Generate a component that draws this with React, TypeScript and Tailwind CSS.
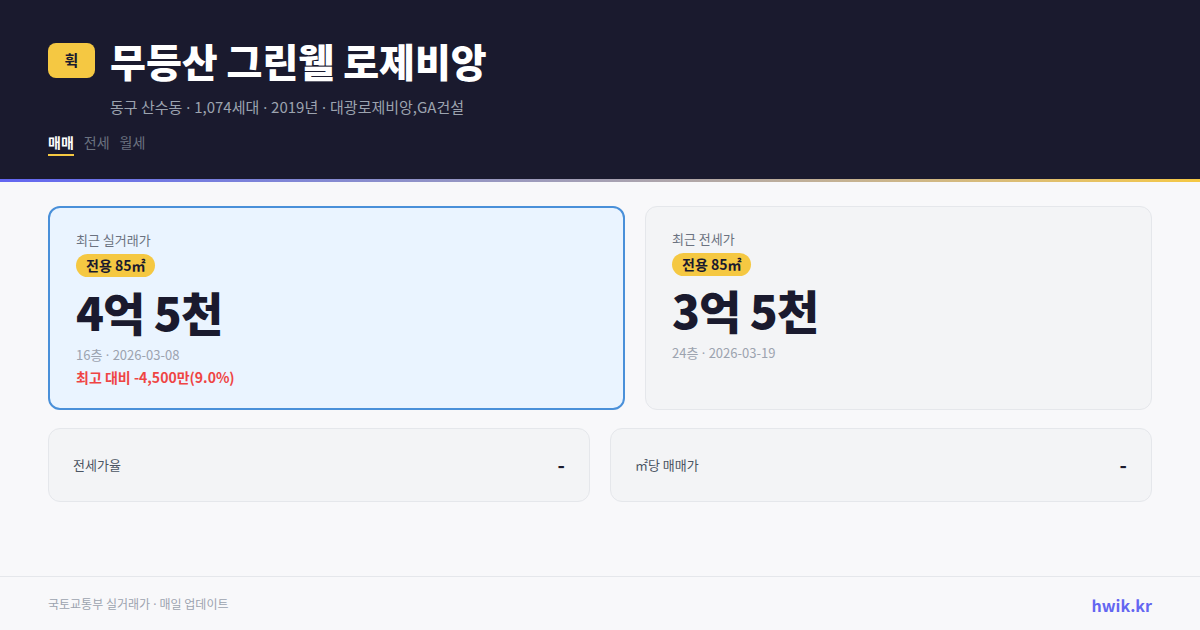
const Dot = () => <span style={{ fontFamily: '"Noto Sans", sans-serif' }}> · </span>;

export default function App() {
  const font = { fontFamily: '"Noto Sans CJK KR", "Noto Sans", sans-serif' };

  return (
    <div className="w-[1200px] h-[630px] bg-[#f8f8fa] flex flex-col overflow-hidden" style={font}>
      {/* HEADER */}
      <header className="bg-[#1a1a2e] h-[179px] px-12 pt-[39px]">
        <div className="flex items-center gap-[15px]">
          <div className="w-[47px] h-[35px] rounded-lg bg-[#f5c842] flex items-center justify-center text-[15px] font-bold text-[#1a1a2e]">
            휙
          </div>
          <h1 className="text-[39px] leading-[44px] font-extrabold text-white -mt-[1px]">무등산 그린웰 로제비앙</h1>
        </div>
        <p className="pl-[62px] mt-[15px] text-[15px] leading-[20px] text-[#9ca3af]">
          동구 산수동<Dot />1,074세대<Dot />2019년<Dot />대광로제비앙,GA건설
        </p>
        <nav className="flex gap-[10px] mt-[15px] text-[14px] leading-[20px]">
          <span className="font-bold text-white border-b-2 border-[#f5c842] pb-[2px]">매매</span>
          <span className="text-[#6b7280]">전세</span>
          <span className="text-[#6b7280]">월세</span>
        </nav>
      </header>
      <div className="h-[3px] bg-gradient-to-r from-[#6366f1] to-[#f5c842]" />

      {/* MAIN */}
      <main className="flex-1 px-12 pt-[24px]">
        <div className="flex gap-5">
          <div className="w-[577px] h-[204px] rounded-xl border-2 border-[#4a90d9] bg-[#eaf4ff] px-[26px] pt-[23px]">
            <div className="text-[13px] leading-[18px] text-[#6b7280]">최근 실거래가</div>
            <span className="inline-block mt-[5px] rounded-full bg-[#f5c842] px-[10px] text-[14px] leading-[23px] font-bold text-[#1a1a2e]">
              전용 85㎡
            </span>
            <div className="text-[46px] leading-[64px] font-black text-[#1a1a2e] tracking-[-1px] mt-[2px]">4억 5천</div>
            <div className="text-[13px] leading-[18px] text-[#9ca3af] mt-[3px]">16층<Dot />2026-03-08</div>
            <div className="text-[14px] leading-[20px] font-semibold text-[#ef4444] mt-[3px]">최고 대비 -4,500만(9.0%)</div>
          </div>
          <div className="flex-1 h-[204px] rounded-xl border border-[#e5e7eb] bg-[#f3f4f6] px-[26px] pt-[23px]">
            <div className="text-[13px] leading-[18px] text-[#6b7280]">최근 전세가</div>
            <span className="inline-block mt-[5px] rounded-full bg-[#f5c842] px-[10px] text-[14px] leading-[23px] font-bold text-[#1a1a2e]">
              전용 85㎡
            </span>
            <div className="text-[46px] leading-[64px] font-black text-[#1a1a2e] tracking-[-1px] mt-[1px]">3억 5천</div>
            <div className="text-[13px] leading-[18px] text-[#9ca3af] mt-[3px]">24층<Dot />2026-03-19</div>
          </div>
        </div>

        <div className="flex gap-5 mt-[18px]">
          <div className="flex-1 h-[74px] rounded-xl border border-[#e5e7eb] bg-[#f3f4f6] px-6 flex items-center justify-between">
            <span className="text-[13px] text-[#4b5563]">전세가율</span>
            <span className="text-[20px] font-bold text-[#1a1a2e]">-</span>
          </div>
          <div className="flex-1 h-[74px] rounded-xl border border-[#e5e7eb] bg-[#f3f4f6] px-6 flex items-center justify-between">
            <span className="text-[13px] text-[#4b5563]">㎡당 매매가</span>
            <span className="text-[20px] font-bold text-[#1a1a2e]">-</span>
          </div>
        </div>
      </main>

      {/* FOOTER */}
      <footer className="h-[54px] border-t border-[#e5e7eb] px-12 pt-[2px] flex items-center justify-between">
        <span className="text-[12px] text-[#9ca3af]">국토교통부 실거래가<Dot />매일 업데이트</span>
        <span className="text-[16px] font-bold text-[#6366f1]">hwik.kr</span>
      </footer>
    </div>
  );
}
